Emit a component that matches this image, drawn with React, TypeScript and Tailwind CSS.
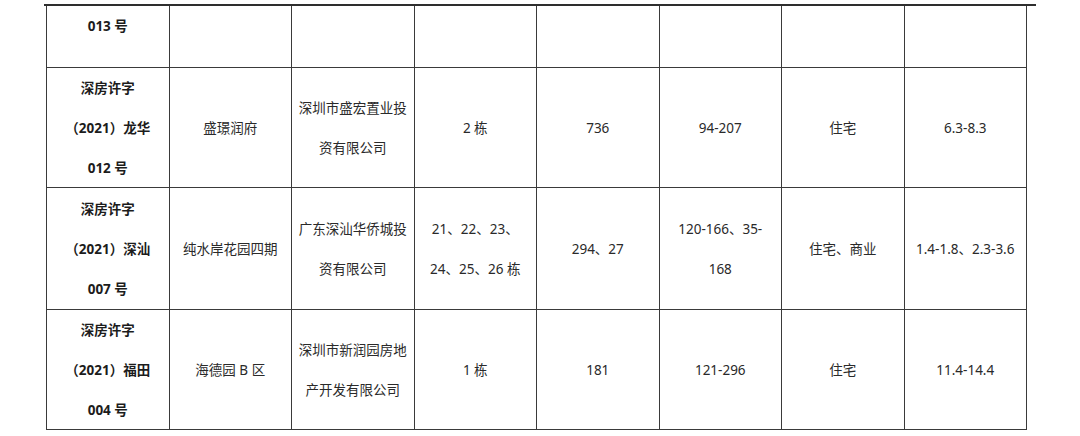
const rows: { h: string; top?: boolean; cells: string[][] }[] = [
  {
    h: "h-[62px]",
    top: true,
    cells: [["013 号"], [], [], [], [], [], [], []],
  },
  {
    h: "h-[120px]",
    cells: [
      ["深房许字", "（2021）龙华", "012 号"],
      ["盛璟润府"],
      ["深圳市盛宏置业投", "资有限公司"],
      ["2 栋"],
      ["736"],
      ["94-207"],
      ["住宅"],
      ["6.3-8.3"],
    ],
  },
  {
    h: "h-[122px]",
    cells: [
      ["深房许字", "（2021）深汕", "007 号"],
      ["纯水岸花园四期"],
      ["广东深汕华侨城投", "资有限公司"],
      ["21、22、23、", "24、25、26 栋"],
      ["294、27"],
      ["120-166、35-", "168"],
      ["住宅、商业"],
      ["1.4-1.8、2.3-3.6"],
    ],
  },
  {
    h: "h-[120px]",
    cells: [
      ["深房许字", "（2021）福田", "004 号"],
      ["海德园 B 区"],
      ["深圳市新润园房地", "产开发有限公司"],
      ["1 栋"],
      ["181"],
      ["121-296"],
      ["住宅"],
      ["11.4-14.4"],
    ],
  },
];

export default function App() {
  return (
    <div
      className="w-[1080px] h-[436px] bg-white pt-[4px] pl-[44px] overflow-hidden"
      style={{ fontFamily: '"Noto Sans", "Noto Sans CJK SC", sans-serif' }}
    >
      <div className="w-[992px] h-[2px] bg-[#2e2e2e]" />
      <div className="ml-[2px] w-[981px] border-l border-[#3a3a3a]">
        {rows.map((row, ri) => (
          <div key={ri} className={`flex border-b border-[#3a3a3a] ${row.h}`}>
            {row.cells.map((lines, ci) => (
              <div
                key={ci}
                className={`flex-1 flex flex-col ${row.top ? "justify-start" : "justify-center"} items-center border-r border-[#3a3a3a] text-[13.5px] leading-[40px] ${
                  ci === 0 ? "font-bold text-[#1c1c1c]" : "text-[#2a2a2a]"
                }`}
              >
                {lines.map((t, li) => (
                  <div key={li} className="whitespace-nowrap">
                    {t}
                  </div>
                ))}
              </div>
            ))}
          </div>
        ))}
      </div>
    </div>
  );
}
